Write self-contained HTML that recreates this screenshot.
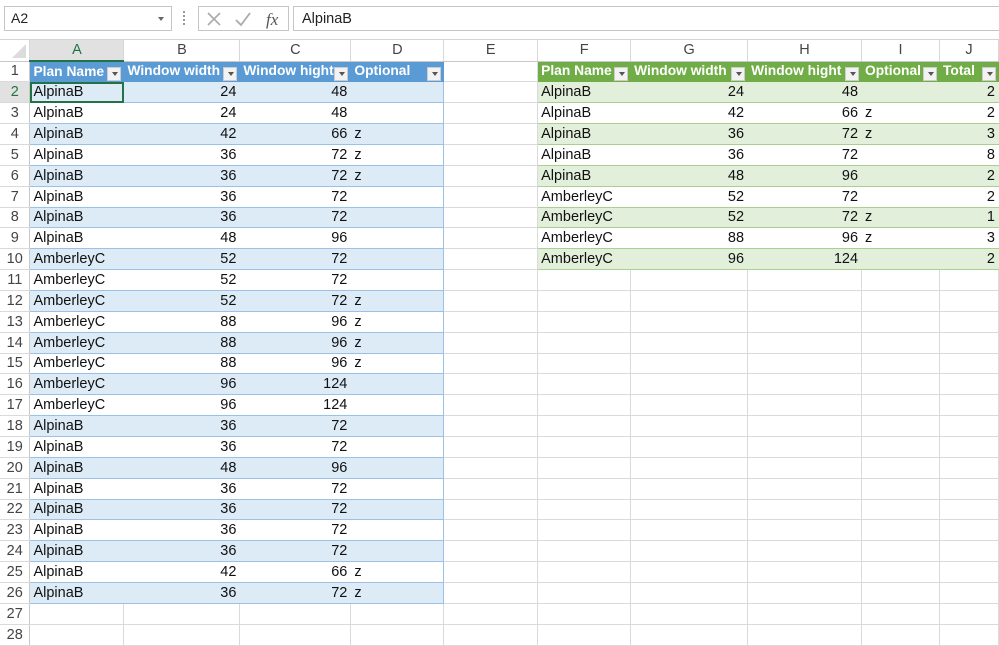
<!DOCTYPE html>
<html><head><meta charset="utf-8"><style>
*{margin:0;padding:0;box-sizing:border-box}
body{width:999px;height:646px;overflow:hidden;background:#fff;font-family:"Liberation Sans",sans-serif;position:relative}
.fb{position:absolute;top:0;left:0;width:999px;height:40px;background:#fff;border-bottom:1px solid #d4d4d4}
.nb{position:absolute;left:4px;top:6px;width:168px;height:25px;border:1px solid #c6c6c6;font-size:14px;line-height:23px;padding-left:6px;color:#222}
.nb:after{content:"";position:absolute;right:7px;top:10px;border:3px solid transparent;border-top:4px solid #666}
.dots{position:absolute;left:183px;top:11px;width:2px;height:14px;border-left:2px dotted #999}
.ic{position:absolute;left:198px;top:6px;width:91px;height:25px;border:1px solid #c6c6c6}
.fx{position:absolute;left:293px;top:6px;width:706px;height:25px;border:1px solid #c6c6c6;border-right:none;font-size:14.5px;line-height:24px;padding-left:8px;color:#222}
table{position:absolute;left:0;top:40px;border-collapse:collapse;table-layout:fixed;font-size:14.5px}
tr{height:20.86px}
td{height:20.86px;border-right:1px solid #dadada;border-bottom:1px solid #dadada;padding:0 3px;white-space:nowrap;overflow:hidden;color:#111;line-height:18px;vertical-align:middle}
td>*{}
tr.ch td{height:21px;background:#fff;color:#444;text-align:center;font-size:14.5px;border-right:1px solid #d8d8d8;border-bottom:1px solid #c8c8c8}
tr.ch td.sel{background:#e1e1e1;border-bottom:2px solid #217346;color:#217346}
td.rh{text-align:center;color:#444;background:#fff;border-right:1px solid #c8c8c8;padding:0;font-size:14.5px}
td.rh.sel{background:#e1e1e1;color:#217346}
.r{text-align:right}
.hb{background:#5b9bd5;color:#fff;font-weight:bold;border-color:#5b9bd5;position:relative;font-size:13.8px}
.hg{background:#70ad47;color:#fff;font-weight:bold;border-color:#70ad47;position:relative;font-size:13.8px}
.dd:after{content:"";position:absolute;right:2px;top:5px;width:12px;height:12px;background:#f2f2f2;border:1px solid #ccc}
.dd:before{content:"";position:absolute;right:5px;top:10px;border:3px solid transparent;border-top:4px solid #555;z-index:2}
.b{background:#ddebf7;border-bottom:1px solid #9bc2e6;border-right-color:#ddebf7}
.w{background:#fff;border-bottom:1px solid #9bc2e6;border-right-color:#fff}
.b.e,.w.e{border-right:1px solid #9bc2e6}
.g{background:#e2efda;border-bottom:1px solid #a9d08e;border-right-color:#e2efda}
.gw{background:#fff;border-bottom:1px solid #a9d08e;border-right-color:#fff}
.act{outline:2px solid #217346;outline-offset:-2px}
</style></head><body>
<div class="fb">
<div class="nb">A2</div>
<div class="dots"></div>
<div class="ic">
<svg width="91" height="25" style="position:absolute;left:0;top:0">
<path d="M9 6 L21 18 M21 6 L9 18" stroke="#aaa" stroke-width="1.6"/>
<path d="M37 13 L42 18 L51 6" stroke="#aaa" stroke-width="1.8" fill="none"/>
<text x="67" y="18" font-family="Liberation Serif,serif" font-style="italic" font-size="17" fill="#555">fx</text>
</svg></div>
<div class="fx">AlpinaB</div>
</div>
<table>
<colgroup><col style="width:30px"><col style="width:94px"><col style="width:116px"><col style="width:111px"><col style="width:93px"><col style="width:94px"><col style="width:93px"><col style="width:117px"><col style="width:114px"><col style="width:78px"><col style="width:59px"></colgroup>
<tr class="ch"><td style="background:#fff"></td><td class="sel">A</td><td>B</td><td>C</td><td>D</td><td>E</td><td>F</td><td>G</td><td>H</td><td>I</td><td>J</td></tr>
<tr><td class="rh">1</td><td class="hb dd">Plan Name</td><td class="hb dd">Window width</td><td class="hb dd">Window hight</td><td class="hb dd">Optional</td><td></td><td class="hg dd">Plan Name</td><td class="hg dd">Window width</td><td class="hg dd">Window hight</td><td class="hg dd">Optional</td><td class="hg dd">Total</td></tr>
<tr><td class="rh sel">2</td><td class="b act">AlpinaB</td><td class="b r">24</td><td class="b r">48</td><td class="b e"></td><td></td><td class="g">AlpinaB</td><td class="g r">24</td><td class="g r">48</td><td class="g"></td><td class="g r">2</td></tr>
<tr><td class="rh">3</td><td class="w">AlpinaB</td><td class="w r">24</td><td class="w r">48</td><td class="w e"></td><td></td><td class="gw">AlpinaB</td><td class="gw r">42</td><td class="gw r">66</td><td class="gw">z</td><td class="gw r">2</td></tr>
<tr><td class="rh">4</td><td class="b">AlpinaB</td><td class="b r">42</td><td class="b r">66</td><td class="b e">z</td><td></td><td class="g">AlpinaB</td><td class="g r">36</td><td class="g r">72</td><td class="g">z</td><td class="g r">3</td></tr>
<tr><td class="rh">5</td><td class="w">AlpinaB</td><td class="w r">36</td><td class="w r">72</td><td class="w e">z</td><td></td><td class="gw">AlpinaB</td><td class="gw r">36</td><td class="gw r">72</td><td class="gw"></td><td class="gw r">8</td></tr>
<tr><td class="rh">6</td><td class="b">AlpinaB</td><td class="b r">36</td><td class="b r">72</td><td class="b e">z</td><td></td><td class="g">AlpinaB</td><td class="g r">48</td><td class="g r">96</td><td class="g"></td><td class="g r">2</td></tr>
<tr><td class="rh">7</td><td class="w">AlpinaB</td><td class="w r">36</td><td class="w r">72</td><td class="w e"></td><td></td><td class="gw">AmberleyC</td><td class="gw r">52</td><td class="gw r">72</td><td class="gw"></td><td class="gw r">2</td></tr>
<tr><td class="rh">8</td><td class="b">AlpinaB</td><td class="b r">36</td><td class="b r">72</td><td class="b e"></td><td></td><td class="g">AmberleyC</td><td class="g r">52</td><td class="g r">72</td><td class="g">z</td><td class="g r">1</td></tr>
<tr><td class="rh">9</td><td class="w">AlpinaB</td><td class="w r">48</td><td class="w r">96</td><td class="w e"></td><td></td><td class="gw">AmberleyC</td><td class="gw r">88</td><td class="gw r">96</td><td class="gw">z</td><td class="gw r">3</td></tr>
<tr><td class="rh">10</td><td class="b">AmberleyC</td><td class="b r">52</td><td class="b r">72</td><td class="b e"></td><td></td><td class="g">AmberleyC</td><td class="g r">96</td><td class="g r">124</td><td class="g"></td><td class="g r">2</td></tr>
<tr><td class="rh">11</td><td class="w">AmberleyC</td><td class="w r">52</td><td class="w r">72</td><td class="w e"></td><td></td><td></td><td></td><td></td><td></td><td></td></tr>
<tr><td class="rh">12</td><td class="b">AmberleyC</td><td class="b r">52</td><td class="b r">72</td><td class="b e">z</td><td></td><td></td><td></td><td></td><td></td><td></td></tr>
<tr><td class="rh">13</td><td class="w">AmberleyC</td><td class="w r">88</td><td class="w r">96</td><td class="w e">z</td><td></td><td></td><td></td><td></td><td></td><td></td></tr>
<tr><td class="rh">14</td><td class="b">AmberleyC</td><td class="b r">88</td><td class="b r">96</td><td class="b e">z</td><td></td><td></td><td></td><td></td><td></td><td></td></tr>
<tr><td class="rh">15</td><td class="w">AmberleyC</td><td class="w r">88</td><td class="w r">96</td><td class="w e">z</td><td></td><td></td><td></td><td></td><td></td><td></td></tr>
<tr><td class="rh">16</td><td class="b">AmberleyC</td><td class="b r">96</td><td class="b r">124</td><td class="b e"></td><td></td><td></td><td></td><td></td><td></td><td></td></tr>
<tr><td class="rh">17</td><td class="w">AmberleyC</td><td class="w r">96</td><td class="w r">124</td><td class="w e"></td><td></td><td></td><td></td><td></td><td></td><td></td></tr>
<tr><td class="rh">18</td><td class="b">AlpinaB</td><td class="b r">36</td><td class="b r">72</td><td class="b e"></td><td></td><td></td><td></td><td></td><td></td><td></td></tr>
<tr><td class="rh">19</td><td class="w">AlpinaB</td><td class="w r">36</td><td class="w r">72</td><td class="w e"></td><td></td><td></td><td></td><td></td><td></td><td></td></tr>
<tr><td class="rh">20</td><td class="b">AlpinaB</td><td class="b r">48</td><td class="b r">96</td><td class="b e"></td><td></td><td></td><td></td><td></td><td></td><td></td></tr>
<tr><td class="rh">21</td><td class="w">AlpinaB</td><td class="w r">36</td><td class="w r">72</td><td class="w e"></td><td></td><td></td><td></td><td></td><td></td><td></td></tr>
<tr><td class="rh">22</td><td class="b">AlpinaB</td><td class="b r">36</td><td class="b r">72</td><td class="b e"></td><td></td><td></td><td></td><td></td><td></td><td></td></tr>
<tr><td class="rh">23</td><td class="w">AlpinaB</td><td class="w r">36</td><td class="w r">72</td><td class="w e"></td><td></td><td></td><td></td><td></td><td></td><td></td></tr>
<tr><td class="rh">24</td><td class="b">AlpinaB</td><td class="b r">36</td><td class="b r">72</td><td class="b e"></td><td></td><td></td><td></td><td></td><td></td><td></td></tr>
<tr><td class="rh">25</td><td class="w">AlpinaB</td><td class="w r">42</td><td class="w r">66</td><td class="w e">z</td><td></td><td></td><td></td><td></td><td></td><td></td></tr>
<tr><td class="rh">26</td><td class="b">AlpinaB</td><td class="b r">36</td><td class="b r">72</td><td class="b e">z</td><td></td><td></td><td></td><td></td><td></td><td></td></tr>
<tr><td class="rh">27</td><td></td><td></td><td></td><td></td><td></td><td></td><td></td><td></td><td></td><td></td></tr>
<tr><td class="rh">28</td><td></td><td></td><td></td><td></td><td></td><td></td><td></td><td></td><td></td><td></td></tr>
</table>
<svg width="30" height="20" style="position:absolute;left:0;top:40px"><path d="M26 18 L26 4 L12 18 Z" fill="#dcdcdc"/></svg>
</body></html>
